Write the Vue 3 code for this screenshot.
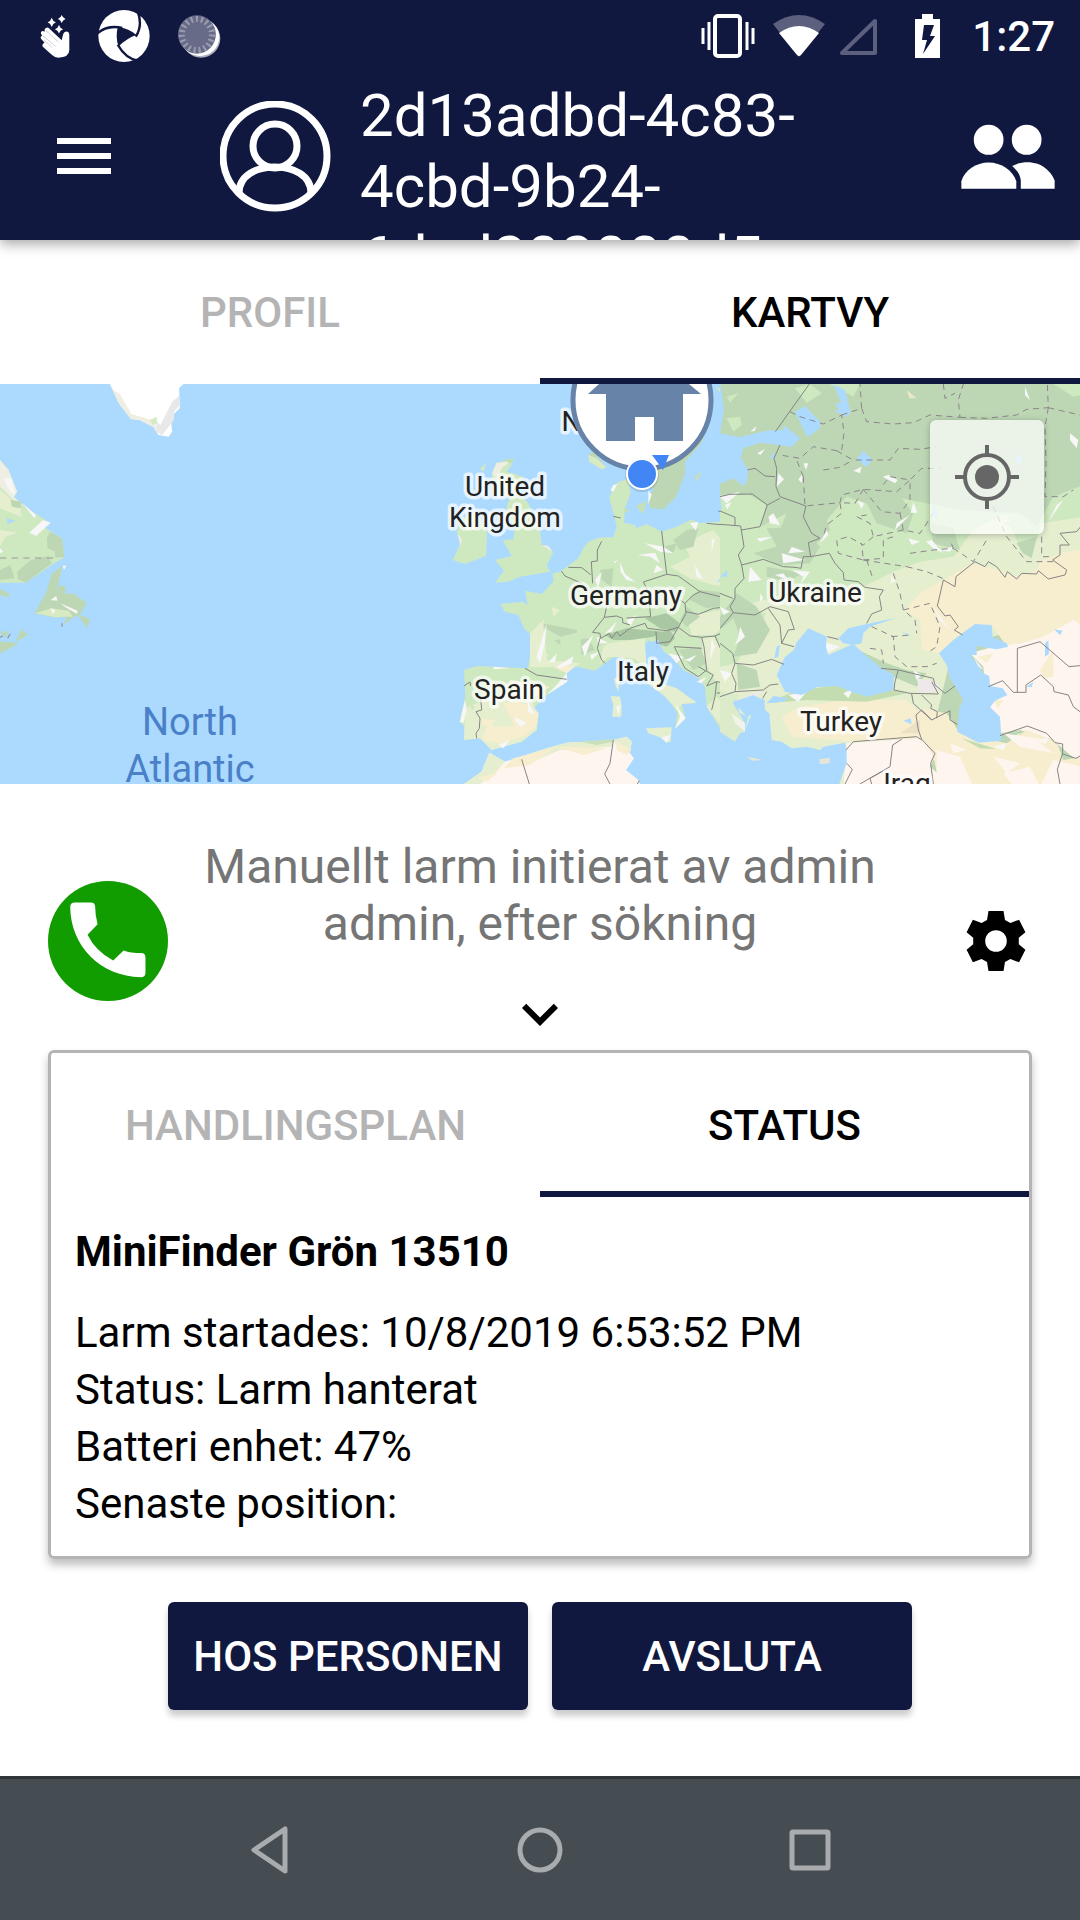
<script setup>
import { ref } from 'vue'

const mainTabs = ['PROFIL', 'KARTVY']
const planTabs = ['HANDLINGSPLAN', 'STATUS']
const mainTab = ref('KARTVY')
const planTab = ref('STATUS')

const details = [
  'Larm startades: 10/8/2019 6:53:52 PM',
  'Status: Larm hanterat',
  'Batteri enhet: 47%',
  'Senaste position:',
]

const countries = [
  { name: 'United', x: 505, y: 496 },
  { name: 'Kingdom', x: 505, y: 527 },
  { name: 'Germany', x: 626, y: 605 },
  { name: 'Spain', x: 509, y: 699 },
  { name: 'Italy', x: 643, y: 681 },
  { name: 'Ukraine', x: 815, y: 602 },
  { name: 'Turkey', x: 841, y: 731 },
  { name: 'Iraq', x: 907, y: 793 },
  { name: 'Norway', x: 609, y: 431 },
]
</script>

<template>
  <div class="screen">
    <header class="top">
      <div class="status-bar">
        <div class="status-left">
          <svg class="i-hand" viewBox="115 44 87 130" preserveAspectRatio="none">
            <g fill="#fff">
              <path d="M149 52q3 11 12 14q-9 3-12 14q-3-11-12-14q9-3 12-14zM178 44q3 9 11 12q-8 3-11 12q-3-9-11-12q8-3 11-12zM170 74q3 10 12 13q-9 3-12 13q-3-10-12-13q9-3 12-13z" />
              <path d="M131 84q6-4 10 0l37 36 4-18q3-9 11-8 7 1 7 9v47q0 22-32 23-10 0-18-8l-27-25q-3-5 1-9l4-4-9-10q-4-5-1-8l3-3-3-5q-2-6 3-9l8 2q-3-6 2-10z" />
            </g>
            <path d="M132 91l36 34M122 105l38 34M126 120l24 22" stroke="#b9bbcb" stroke-width="2" fill="none" />
          </svg>
          <svg class="i-logo" viewBox="290 29 150 154" preserveAspectRatio="none">
            <ellipse cx="365" cy="106" rx="74" ry="77" fill="#fff" />
            <path d="M347 79Q380 83 401 103Q374 112 349 137Q340 108 347 79z" fill="#111840" />
            <path d="M288 98Q318 72 360 82M399 108Q420 74 404 32M347 132Q370 174 408 180" fill="none" stroke="#111840" stroke-width="7" />
            <path d="M400 36L412 48L404 30zM390 183L410 176L425 185z" fill="#111840" />
          </svg>
          <svg class="i-sync" viewBox="513 42 125 130" preserveAspectRatio="none">
            <ellipse cx="580" cy="113" rx="56" ry="58" fill="#aeb0bf" />
            <ellipse cx="577" cy="109" rx="56" ry="57" fill="#fff" />
            <ellipse cx="568" cy="101" rx="55" ry="58" fill="#686b87" />
            <ellipse cx="568" cy="101" rx="44" ry="47" fill="none" stroke="#9a9caf" stroke-width="18" stroke-dasharray="6 9" />
          </svg>
        </div>
        <div class="status-right">
          <svg class="i-vibrate" viewBox="0 0 54 44" fill="none" stroke="#fff">
            <rect x="14" y="2" width="25" height="40" rx="3" stroke-width="4" />
            <path d="M2 14v16M8 8v28M46 8v28M52 14v16" stroke-width="3" />
          </svg>
          <svg class="i-wifi" viewBox="0 0 52 42">
            <path d="M0 9Q26-9 52 9L26 42z" fill="#5c5f7d" />
            <path d="M6 18Q26 4 46 18L28 40Q26 42 24 40z" fill="#fff" />
          </svg>
          <svg class="i-signal" viewBox="0 0 37 37">
            <path d="M2 35L35 3V35z" fill="none" stroke="#5c5f7d" stroke-width="4" stroke-linejoin="round" />
          </svg>
          <svg class="i-battery" viewBox="0 0 25 44">
            <path d="M7 0h11v5h7v39H0V5h7z" fill="#fff" />
            <path d="M9 11h10l-4 11h5L8 40l4-14H7z" fill="#111840" />
          </svg>
          <time class="clock">1:27</time>
        </div>
      </div>
      <div class="app-bar">
        <button class="icon-button" aria-label="Meny">
          <svg class="i-menu" viewBox="0 0 54 36"><path d="M0 0h54v6H0zM0 15h54v6H0zM0 30h54v6H0z" fill="#fff" /></svg>
        </button>
        <svg class="i-avatar" viewBox="0 0 111 111" fill="none" stroke="#fff" stroke-width="7">
          <circle cx="55" cy="55" r="52" />
          <circle cx="55" cy="45" r="22" />
          <path d="M19 92C19 74 37 66 55 66S91 74 91 92" />
        </svg>
        <h1 class="title">2d13adbd-4c83-4cbd-9b24-6dcd202000d5</h1>
        <button class="icon-button" aria-label="Personer">
          <svg class="i-people" viewBox="1224 377 272 194" preserveAspectRatio="none" fill="#fff">
            <ellipse cx="1304" cy="424" rx="43" ry="45" />
            <ellipse cx="1414" cy="424" rx="43" ry="45" />
            <path d="M1225 570V548C1234 515 1268 492 1304 492S1374 515 1384 548V570z" />
            <path d="M1372 502C1400 489 1424 489 1445 496C1470 505 1489 528 1495 546V570H1397V545C1395 527 1385 514 1372 502z" />
          </svg>
        </button>
      </div>
    </header>

    <nav class="tabs">
      <button v-for="tab in mainTabs" :key="tab" class="tab" :class="{ active: tab === mainTab }" @click="mainTab = tab">{{ tab }}</button>
    </nav>

    <section class="map">
      <svg class="map-canvas" viewBox="0 384 1080 400" preserveAspectRatio="xMidYMid slice">
        <defs>
          <clipPath id="east"><rect x="0" y="0" width="1090" height="1220" /></clipPath>
        </defs>
        <rect y="384" width="1080" height="400" fill="#acdaff" />

        <!-- Greenland -->
        <g transform="translate(0 230) scale(.3444 .3333)">
          <path d="M318 460L345 520L380 567L405 570L445 590L460 615L490 620L500 605L497 580L505 552L522 535L520 475L535 460z" fill="#fff" />
          <path d="M318 460L330 480L348 492L382 552L440 570L460 600L458 612L445 590L405 570L380 567L345 520z" fill="#efeee2" />
          <path d="M520 497L500 515L466 585L452 572L455 605L470 616L490 590L505 570L505 545L520 528z" fill="#e8e8e8" />
          <path d="M435 570L455 560L456 580L445 586z" fill="#d5eac5" />
        </g>

        <!-- Labrador and Newfoundland -->
        <g transform="translate(0 500) scale(.3444 .3333)">
          <path d="M0 -120L25 -90L50 -25L40 -10L85 30L145 68L125 80L180 115L187 172L150 195L75 248L0 248z" fill="#cee8bf" />
          <path d="M0 -120L25 -90L50 -25L40 -10L70 20L40 0L0 -40z" fill="#efeee2" />
          <path d="M10 -65L32 -65L45 -15L30 -25zM65 10L105 45L100 55zM85 98L125 60L147 68L105 108zM0 145L10 155L0 160z" fill="#f7f7f7" />
          <path d="M0 -30L60 20L62 50L0 25zM0 90L50 98L15 110L0 140z" fill="#e5efcf" />
          <path d="M145 95L180 115L187 172L160 172L160 155L138 145L136 115zM50 215L90 180L140 168L150 190L75 248L52 238zM0 210L30 195L42 235L0 240zM30 0L62 5L60 25L35 20z" fill="#bdd7b4" />
          <path d="M20 55L45 62L22 72z" fill="#acdaff" />
          <path d="M0 174H152V190" fill="none" stroke="#999" stroke-width="3" stroke-dasharray="18 16" />
          <path d="M182 197L150 222L135 275L100 340L155 352L195 352L182 375L225 345L254 385L262 358L232 345L252 308L210 280L190 282V260L175 255L165 270z" fill="#bdd7b4" />
          <path d="M102 340L150 325L200 333L212 350L190 350L160 352z" fill="#d8eac2" />
          <path d="M147 300L163 288L167 302zM175 310L225 332L224 342L190 322zM182 197L192 197L186 210zM145 325L160 330L155 343z" fill="#f7f7f7" />
          <path d="M0 267L30 283L22 292L0 285zM0 425L55 428L30 445L0 460zM62 388L82 405L45 425zM0 395L25 393L15 415z" fill="#bdd7b4" />
          <path d="M180 370V380M22 415L30 402M0 412L8 408" stroke="#888" stroke-width="3" />
        </g>

        <!-- Western and central Europe, northern Africa -->
        <g transform="translate(400 380) scale(.33333)">
          <path d="M170 455L182 490L158 540L195 552L258 528L262 450L230 400L190 410z" fill="#cee8bf" />
          <path d="M240 268L260 245L250 275zM276 280L290 248L342 238L330 262L320 275L370 290L350 330L385 370L420 450L425 495L460 515L440 558L452 575L360 590L325 605L285 608L312 572L285 540L335 528L308 480L340 478L345 440L315 400L330 350L275 340z" fill="#cee8bf" />
          <path d="M276 280L290 248L330 245L305 265L290 300zM425 495L445 498L458 515zM173 462L186 478L182 500z" fill="#efeee2" />
          <path d="M310 238L342 238L332 252zM275 325L300 330L290 345z" fill="#c3ddb0" />

          <path d="M640 320L655 305L685 298L692 340L675 385L672 428L705 435L710 445L740 432L785 455L830 440L875 418L895 430L960 425V100L1090 100V950L1020 965L1000 985L1035 1050L1010 1085L960 1045L920 980L915 920L890 890L850 870L820 835L770 800L745 780L735 800L740 860L790 912L830 925L848 945L890 968L845 972L857 1015L825 1046L832 1000L800 950L740 905L715 860L650 825L612 852L585 872L520 858L500 875L502 905L440 945L402 985L416 1000L410 1050L365 1085L310 1092L275 1110L240 1075L192 1080L195 1040L178 1025L196 950L192 870L230 858L383 865L390 830V762L372 745L355 705L315 695L300 672L368 665L382 675L376 632L425 642L460 605L458 580L480 575L535 535L550 505L565 485L600 472L640 472L650 440L640 400L628 355z" fill="#cee8bf" />
          <path d="M565 225L580 215L620 262L605 268L568 245zM880 100H938L905 190L855 245V282L828 352L790 388L752 385L745 350L760 330L748 290z" fill="#bdd7b4" />
          <path d="M708 378L742 362L728 402zM670 385L690 390L675 398zM883 290L905 275L890 305zM984 250L1008 238L990 258z" fill="#c6dfb8" />
          <path d="M565 225L590 235L620 262L605 268L568 245z" fill="#d8eac2" />

          <!-- dry and lowland areas -->
          <path d="M195 985L250 960L380 930L405 985L416 1000L410 1050L365 1085L275 1110L240 1075L192 1080zM390 760L430 720L450 790L440 840L540 850L500 880L460 860L390 862zM810 560L870 530L850 490L940 450L1000 520L1005 620L940 615L870 595zM860 710L985 685L1000 720L940 765L875 765zM905 775L940 770L1000 850L990 930L945 900L910 840zM625 790L735 775L740 860L700 835L625 830L600 850L610 800zM735 905L790 912L830 925L890 968L845 972L832 990L790 945zM950 950L1000 1000L980 1060L920 980zM480 690L455 680L460 710z" fill="#e5efcf" />
          <path d="M245 1080L260 1040L345 1040L310 970L360 965L415 1000L408 1040L370 1070L300 1090zM245 1015L285 1020L275 1040L245 1035zM330 900L450 920L400 955L340 930zM460 860L520 858L500 880z" fill="#f7edcf" />
          <path d="M192 1212L245 1175L268 1118L315 1145L440 1105L500 1088L640 1080L680 1070L695 1085L690 1120L702 1135L678 1170L715 1200L720 1212z" fill="#fff5ef" />
          <path d="M192 1212L245 1175L268 1118L315 1145L285 1180L240 1212zM350 1135L440 1105L500 1088L640 1080L635 1100L480 1110L410 1140zM640 1080L680 1070L695 1085L690 1120L660 1110z" fill="#e5efcf" />
          <path d="M230 1195L300 1175L340 1135L480 1100L620 1105L550 1125L470 1100L390 1155L310 1165L260 1205zM650 1085L690 1105L680 1125L650 1110z" fill="#f7edcf" />
          <path d="M540 1085L640 1078V1085L590 1095z" fill="#c9e0b8" />
          <path d="M738 1045L815 1042L812 1085L800 1088L780 1072L745 1060zM632 948L660 950L665 975L664 1010L637 1010L640 975zM642 895L658 895L655 935L646 915z" fill="#e5efcf" />
          <path d="M960 1045L1000 1060L1018 1070L1005 1085L965 1070z" fill="#d5eac5" />

          <!-- forests and mountains -->
          <path d="M615 765L680 745L735 750L790 755L760 770L690 780L640 780zM735 715L800 700L840 730L825 755L780 745zM770 760L810 750L825 775L800 800L770 790z" fill="#a9c7a3" />
          <path d="M960 12L1090 12V170L1020 172L975 160L962 125zM820 480L860 450L895 445L880 500L840 510zM870 650L900 630L1000 640L985 675L920 685L870 660zM985 720L1030 700L1090 710V800L1000 805L970 770L1000 760zM1020 205L1090 185V400L1040 350L1010 310L1045 315L1040 260L1020 230zM530 780L565 775L585 810L540 825zM600 570L640 565L635 620L605 600zM430 730L440 820L500 840L540 810L530 750L480 740zM835 810L900 800L920 850L880 870zM840 720L860 680L900 710L860 740zM790 500L830 490L820 520z" fill="#bdd7b4" />
          <path d="M290 862L375 865L400 880L380 905L340 890zM200 950L225 985L215 990zM965 1000L990 1020L975 1035zM480 770L540 755L545 830L500 845L440 820L430 740zM945 20L1015 45L985 65zM975 110L1020 120L1010 155L975 140z" fill="#cee8bf" />
          <path d="M462 782L480 778L482 795z" fill="#bdd7b4" />

          <!-- bare patches -->
          <path d="M712 525L765 518L780 550L750 530zM735 490L790 500L820 520L780 515zM870 430L895 425L888 452zM935 480L945 475L935 515zM660 545L675 582L705 605L680 600L662 575zM585 600L605 575L595 625zM885 555L910 600L890 590zM410 830L440 730L435 790L420 850zM445 848L470 820L465 845zM470 860L520 828L515 850L480 865zM545 800L580 765L570 790L555 830zM570 825L600 815L575 840zM615 760L650 725L635 755zM680 720L710 705L690 740zM590 770L625 790L595 790zM985 735L1035 755L1005 795L1000 775L1018 765zM935 775L945 800L930 840zM855 840L890 825L870 845zM890 905L920 890L905 910zM805 820L850 830L830 850zM825 970L857 1015L825 1046L840 1010zM640 315L652 312L640 335L632 330zM745 330L755 345L745 372zM345 1010L380 1030L362 1040L345 1020zM380 955L405 1005L385 995zM440 945L465 920L500 880L502 905zM282 860L330 865L280 868zM295 1095L330 1080L310 1105zM180 1025L195 960L200 990L190 1030zM965 320L990 330L1010 345L975 340zM970 370L995 360L985 385zM1060 145L1072 140L1068 155zM640 545L655 540L645 550zM770 555L790 570L760 580zM960 605L975 560L985 590zM1000 1015L1035 1050L1005 1035zM785 1072L812 1065L800 1088zM648 980L662 975L655 1005z" fill="#f7f7f7" />
          <path d="M950 608L982 568V590zM735 790L775 780L800 835L780 870L740 860z" fill="#acdaff" />

          <!-- borders -->
          <g fill="none" stroke="#858585" stroke-width="3" stroke-linejoin="round">
            <path d="M785 453L800 583L730 606L748 640M800 583L835 588L900 635L960 650L1000 640L1035 590L1015 520L1030 490L1025 440L920 430M605 484L592 510V543L574 545L578 610M505 562L545 563L572 584M484 573L495 588L545 610M640 409L662 414M620 680L613 712L578 757L600 760L602 775L628 760L635 775L650 755L660 768L690 745L735 730L742 745L800 752L835 742L858 700L855 670L840 660M613 712L650 708L668 715V728L690 735M680 714L752 710L748 670M855 670L880 645L900 635M858 695L895 703L940 685L985 680L1005 650L1000 640M985 680L1005 700L985 750L945 768L905 772L870 768L835 742M835 742L810 785L770 790L768 755M600 775L592 805L605 840L615 850M905 772L912 800L920 870L895 890L855 865L823 800L905 805M945 768L968 820L1000 820L1000 850L1005 900L980 910L950 905L945 950L935 990M895 860L940 885L920 918L950 905M1000 850L1080 852M950 940L1010 930L1080 930M375 865L410 885L500 898M192 918L210 906L212 918M242 955L245 990L228 995L240 1015L238 1045L228 1060L230 1075M365 1138L388 1212M640 1080L630 1150L614 1182L630 1212M712 1212L718 1202M955 393L1005 412L1005 432M960 358L985 343L1058 342L1080 360M1030 555L1080 542M1025 450L1080 443M1042 270L1068 263L1080 275" />
          </g>
          <path d="M1043 1132L1085 1138L1060 1140z" fill="#efeee2" />
        </g>

        <!-- Eastern Europe, Black Sea, Caspian -->
        <g transform="translate(720 380) scale(.33333)" clip-path="url(#east)">
          <rect width="1090" height="1220" fill="#bdd7b4" />
          <path d="M0 345L90 345L140 375L120 440L200 400L180 450L250 470L290 490L330 450L320 420L380 350L440 370L470 430L560 460L580 400L545 355L620 370L720 390L900 400L950 440L1000 350L1090 315V650L600 720L0 900z" fill="#cee8bf" />
          <path d="M0 860L50 850L140 700L60 680L130 660L300 640L430 620L520 575L600 545L700 530L760 450L860 400L905 520L935 530L965 430L1090 410V700L700 800L600 1212L0 1212z" fill="#e5efcf" />
          <path d="M140 445L240 440L300 500L270 550L180 555L100 520L170 500zM0 710L50 640L110 680L150 750L110 820L40 830L60 770L40 715L0 750zM890 490L950 470L935 535L910 520zM50 850L110 870L120 920L55 930zM140 560L250 580L200 605L140 590zM630 430L700 445L720 510L640 490zM415 810L500 850L560 870L620 880L590 920L520 890L470 860z" fill="#bdd7b4" />
          <path d="M555 690L600 640L670 600L755 550L855 575L890 590L950 570L960 545L1030 515L1090 510V730L1020 760L860 800L820 740L765 735L720 765L660 820L605 808L600 720z" fill="#f7edcf" />
          <path d="M750 820L820 800L900 790L970 770L1060 720L1090 740V1160L1000 1080L900 1050L840 1060L800 950L790 860z" fill="#fff5ef" />
          <path d="M185 1010L240 980L380 960L560 960L600 1000L620 1075L400 1085L215 1070z" fill="#f7edcf" />
          <path d="M380 1090L600 1075L650 1120L630 1160L700 1220H370z" fill="#fff5ef" />
          <path d="M595 985L680 1000L720 1060L860 1090L920 1050L1010 1085L1030 1140L1090 1130V1220H660L640 1130L605 1070z" fill="#f7edcf" />
          <path d="M650 1110L720 1130L760 1220H650zM850 1060L990 1080L960 1090L1000 1120L900 1100zM1000 1140L1090 1160V1220H960zM820 1130L900 1150L860 1180zM850 1180L930 1160L960 1220H880zM690 1090L740 1110L700 1120z" fill="#fff5ef" />
          <path d="M960 870L1000 810L1000 890L970 895zM775 830L820 820L800 850zM820 960L850 960L835 985z" fill="#f7edcf" />
          <path d="M540 1060L600 1020L600 1060z" fill="#eee0c5" />
          <path d="M140 970L220 935L350 915L440 945L520 930L560 940L440 965L260 960zM725 1075L790 1095L830 1108L780 1105z" fill="#c3ddb0" />

          <!-- clearings -->
          <path d="M20 50L55 40L30 68zM225 25L270 12L305 40L260 68zM330 12L420 12L400 50zM20 115L60 110L65 135L40 155zM1000 12L1090 12V45L1060 50zM360 430L395 430L380 450zM900 420L880 450L850 430z" fill="#cee8bf" />
          <path d="M560 30L590 55L568 55z" fill="#e8e8c5" />
          <path d="M92 155L108 138L105 152zM112 220L135 207L122 225zM0 350L60 335L20 370zM15 375L35 365L22 388zM170 320L175 280L192 298zM235 298L248 282L245 310zM250 250H265L258 270zM400 272L425 260L420 280zM505 285L533 300L525 310L488 290zM412 362L432 370L425 388zM580 365L592 398L572 398zM570 405L525 450L530 430zM635 480L670 520L640 505L618 485zM160 400L180 435L150 430L145 410zM300 490L320 450L325 465zM215 500L255 515L205 520zM185 520L255 540L190 550zM90 560L125 600L85 605zM215 570L270 575L240 615L250 590zM165 585L190 580L205 600zM110 475L160 470L120 485zM1050 160L1075 180L1070 205L1050 180zM915 20L930 60L915 45zM1030 360L985 425L1010 375zM0 680L30 695L10 705zM60 740L75 770L45 795L55 770zM0 870L35 880L15 905zM295 780L360 800L320 820zM370 940L400 925L385 955zM205 945L260 935L235 965zM640 680L690 750L660 720zM515 585L525 605L512 610zM580 870L605 885L590 900zM45 1000L75 1050L40 1035zM565 475L600 485L575 495zM655 510L700 500L690 515zM120 640L130 655L120 665zM820 1100L860 1090L850 1110zM870 1075L900 1060L885 1085zM965 1080L985 1070L975 1095zM760 830L790 870L775 860zM800 780L850 800L825 815z" fill="#f7f7f7" />
          <path d="M590 895L650 905L660 930L600 940zM75 950L130 930L110 950z" fill="#efe8ea" />

          <!-- water -->
          <g fill="#acdaff">
            <path d="M0 12H2L12 90L0 160L60 172L140 152L190 150L190 135L240 175L215 200L120 188L70 205L62 235L85 270L80 305L70 318L40 295L0 312z" />
            <path d="M225 95L255 78L300 125V145L262 172zM340 12L375 30L392 100L372 112L345 70L365 70zM410 238L430 213L458 240L438 260zM340 95L375 85L365 100zM0 350L5 385L0 395zM150 230L163 220L165 240zM882 240L903 222L905 252zM635 360L655 405L645 415zM0 590L22 570L20 590z" />
            <path d="M170 885L195 830L222 810L228 790L265 745L310 765L320 770L318 800L325 825L385 798L400 792L425 815L480 862L522 885L520 930L440 950L395 935L352 918L290 922L245 945L195 935z" />
            <path d="M355 775L385 745L440 732L530 713L450 740L430 760L425 790L400 795L370 790zM170 800L180 795L175 830L163 835z" />
            <path d="M657 820L700 780L765 732L815 735L818 772L860 790L865 800L830 808L770 798V825L752 825L790 880L808 888L810 918L848 925L862 945L825 962L810 982L840 1010L845 1082L775 1088L712 1055L718 985L730 960L690 895L680 855z" />
            <path d="M140 970L160 948L205 955L190 965zM550 1022L572 1015L575 1033zM1002 748L1028 752L1020 765zM975 790L985 780L987 822L975 830zM920 920L940 905L935 922zM540 752L575 768L560 765zM0 960L45 955L60 1000L85 1010L75 1050L110 965L130 955L135 990L148 1000L155 1080L185 1085L215 1105L260 1100L300 1110L310 1100L375 1088L380 1112V1150L358 1212V1220H0z" />
            <path d="M40 965L100 945L135 962L133 990L80 1010z" />
          </g>
          <path d="M0 930L60 945L38 968L75 1030V1055L60 1060L45 1085L0 1055z" fill="#dcebc9" />
          <path d="M35 1000L75 1030V1055L45 1030z" fill="#f1f3ea" />
          <path d="M82 1130L128 1140L95 1142zM298 1138L330 1133L328 1150L300 1152z" fill="#e6e6d5" />

          <g fill="none" stroke="#858585" stroke-width="3" stroke-linejoin="round">
            <path d="M268 12L166 155M180 195L162 235L170 265L168 320L180 350L258 378L250 410L275 460L300 475L265 488L272 530L328 520L345 550L370 578L372 600L415 605L435 622L490 630L478 650L485 690L455 702L440 730M82 270L105 265L135 288L165 290M0 350L30 343L97 342L142 375L120 440L65 450M142 375L180 355M0 393L45 412V435M0 433L62 438L72 500L55 525L65 555L72 595L45 625L45 655L30 680L40 698L0 745M65 555L130 538L190 560L225 562L243 565L250 530L272 530M40 698L105 705L150 680L205 695L223 748L205 750L185 790L222 800M145 685L180 735L185 790M0 640L38 655M0 790L38 820L45 850L100 855L155 838L192 853M45 850L35 880L48 910L45 935L0 950M45 935L130 930L150 915L175 912M128 955L140 935" />
            <path d="M322 770L355 778M483 865L535 870L640 895L645 915L675 940L705 918M535 870L525 905L522 930L570 940L655 942L635 905M575 942L580 970L635 1020L690 992V1020L712 1033M605 945L635 975L632 985L652 995L650 1015M635 1020L605 990L588 1005L595 1050L605 1078L640 1115L645 1120L632 1150L640 1212M378 1110L400 1085L590 1070L605 1080M545 1078L518 1095L510 1160L420 1212M380 1150L397 1168L375 1212M495 1170L450 1195L455 1212" />
            <path d="M440 730M728 765L703 750L715 740L690 705L675 708L652 678L670 600L705 620L708 590L765 545L795 560L805 545L830 560L855 592L862 575L890 597L905 580L950 582L955 572L985 597L1035 585L1040 570L998 540L1020 525V495L1048 495L1020 460L1070 455L1090 430M892 937V805L960 785L1047 860L1080 857M805 920L848 902L880 937H918V915L962 885L1000 920L1002 935L1045 945L1060 980L1080 995M840 1067L922 1038L980 1060L1005 1088L1028 1092V1120L1012 1168L1020 1212M1028 1122L1068 1135L1080 1128" />
          </g>
          <g fill="none" stroke="#8d858b" stroke-width="3" stroke-dasharray="18 14">
            <path d="M210 95L240 110L310 132L365 105L372 160L365 210L350 212L280 200L240 235L180 225M365 105L425 85L420 12M425 85L440 125L520 132L580 128L630 105L720 112L715 60L730 12M670 12L675 55L705 40M720 112L800 115L890 105L920 88L985 83L982 12M985 83L1080 105M985 83L975 140L978 250L975 350L1030 350L1060 330M350 212L390 235L410 240L510 240L535 205L600 208L650 200M310 270L360 262L390 245M250 290L230 240M250 290L255 378L360 368L365 345L430 328L530 335L570 300L510 290L480 325M430 328L405 370L360 368L365 400L320 435L310 470M430 328L485 395L540 400L570 360V300L605 265L660 265M540 400L550 450L600 460L640 400M550 450L460 470L450 430L410 410L440 405M460 470L430 495L385 470L350 480L355 520L430 540L425 490M430 540L490 535V480L520 470M430 540L560 560M570 520L640 510L700 505L690 480M560 560L620 575L680 600M440 540L460 600M700 505L760 545L800 480M820 380L860 470L920 545L1000 545M965 470V530H1000M520 580L540 640L550 690L585 720L590 760M550 690L630 670L660 740L650 800L620 820M455 740L520 770L525 830L560 860L620 860L650 850M515 770L570 765M450 805L485 810L490 850" />
          </g>
        </g>

        <g class="country">
          <text v-for="c in countries" :key="c.name" :x="c.x" :y="c.y">{{ c.name }}</text>
        </g>
        <g class="ocean">
          <text x="190" y="735">North</text>
          <text x="190" y="782">Atlantic</text>
        </g>

        <!-- home marker and own position -->
        <circle cx="642" cy="400" r="69" fill="#fff" stroke="#6883a8" stroke-width="5" />
        <path d="M588 394L642 345L701 394H683V441H654V417H635V441H606V394z" fill="#6883a8" />
        <path d="M652 455H669L663 470z" fill="#4285f4" />
        <circle cx="642" cy="475" r="17" fill="#000" opacity=".12" />
        <circle cx="642" cy="474" r="15" fill="#4285f4" stroke="#fff" stroke-width="2" />
      </svg>
      <button class="locate" aria-label="Min position">
        <svg class="i-locate" viewBox="0 0 64 64" stroke="#666" stroke-width="4">
          <circle cx="32" cy="32" r="22" fill="none" />
          <circle cx="32" cy="32" r="12" fill="#666" stroke="none" />
          <path d="M32 0v9M32 55v9M0 32h9M55 32h9" />
        </svg>
      </button>
    </section>

    <main class="content">
      <section class="alarm">
        <button class="icon-button" aria-label="Ring">
          <svg class="i-phone" viewBox="139 155 346 358" preserveAspectRatio="none">
            <ellipse cx="312" cy="334" rx="173" ry="179" fill="#119c00" />
            <path d="M216 219H262Q275 219 275 232Q275 258 282 284L253 315Q276 364 327 392L357 362Q378 370 407 370Q420 370 420 383V428Q420 442 407 442C290 440 204 350 203 232Q204 219 216 219z" fill="#fff" />
          </svg>
        </button>
        <div class="message">
          <p>Manuellt larm initierat av admin admin, efter sökning</p>
          <button class="icon-button" aria-label="Visa mer">
            <svg class="i-24" viewBox="0 0 24 24"><path d="M16.59 8.59L12 13.17L7.41 8.59L6 10l6 6 6-6z" /></svg>
          </button>
        </div>
        <button class="icon-button settings" aria-label="Inställningar">
          <svg class="i-24" viewBox="0 0 24 24"><path fill-rule="evenodd" d="M9.5 2h5l.5 3 1.8 1 2.9-1.1 2.1 4.2-2.2 1.8v2.2l2.2 1.8-2.1 4.2-2.9-1.1-1.8 1-.5 3h-5l-.5-3-1.8-1-2.9 1.1-2.1-4.2 2.2-1.8v-2.2l-2.2-1.8 2.1-4.2 2.9 1.1 1.8-1zM12 8.4a3.6 3.6 0 1 0 0 7.2a3.6 3.6 0 1 0 0-7.2z" /></svg>
        </button>
      </section>

      <section class="card">
        <nav class="tabs">
          <button v-for="tab in planTabs" :key="tab" class="tab" :class="{ active: tab === planTab }" @click="planTab = tab">{{ tab }}</button>
        </nav>
        <div class="card-body">
          <h2>MiniFinder Grön 13510</h2>
          <p v-for="line in details" :key="line">{{ line }}</p>
        </div>
      </section>

      <div class="actions">
        <button class="action">HOS PERSONEN</button>
        <button class="action">AVSLUTA</button>
      </div>
    </main>

    <footer class="nav-bar">
      <button class="icon-button" aria-label="Tillbaka">
        <svg class="i-nav" viewBox="0 0 48 48"><path d="M8 24L39 3V45z" stroke-linejoin="round" /></svg>
      </button>
      <button class="icon-button" aria-label="Hem">
        <svg class="i-nav" viewBox="0 0 48 48"><circle cx="24" cy="24" r="20" /></svg>
      </button>
      <button class="icon-button" aria-label="Översikt">
        <svg class="i-nav" viewBox="0 0 48 48"><rect x="6" y="6" width="36" height="36" rx="1" /></svg>
      </button>
    </footer>
  </div>
</template>

<style>
body {
  margin: 0;
  background: #fff;
}
</style>

<style scoped>
.screen {
  display: flex;
  flex-direction: column;
  min-height: 100vh;
  font-family: Roboto, "Liberation Sans", sans-serif;
  font-size: 42px;
  color: #000;
}

svg {
  display: block;
  flex: none;
}

button {
  font: inherit;
  border: 0;
  margin: 0;
  padding: 0;
  background: none;
  cursor: pointer;
}

.icon-button {
  display: flex;
  align-items: center;
  justify-content: center;
  flex: none;
}

/* header */
.top {
  position: relative;
  z-index: 1;
  background: #111840;
  color: #fff;
  box-shadow: 0 4px 12px rgba(0, 0, 0, 0.35);
}

.status-bar {
  display: flex;
  justify-content: space-between;
  align-items: center;
  height: 72px;
  padding: 0 25px 0 40px;
}

.status-left,
.status-right {
  display: flex;
  align-items: center;
}

.status-left {
  gap: 28px;
}

.i-hand { width: 30px; height: 43px; }
.i-logo { width: 52px; height: 52px; }
.i-sync { width: 43px; height: 43px; }
.i-vibrate { width: 54px; height: 44px; }
.i-wifi { width: 52px; height: 42px; margin-left: 18px; }
.i-signal { width: 37px; height: 37px; margin-left: 15px; }
.i-battery { width: 25px; height: 44px; margin-left: 38px; }

.clock {
  margin-left: 32px;
  font-weight: 500;
}

.app-bar {
  display: flex;
  align-items: center;
  height: 168px;
  padding: 0 25px 0 57px;
}

.i-menu { width: 54px; height: 36px; }
.i-avatar { width: 111px; height: 111px; margin-left: 109px; }
.i-people { width: 94px; height: 65px; }

.title {
  flex: 1;
  align-self: stretch;
  margin: 0 140px 0 29px;
  padding-top: 8px;
  overflow: hidden;
  font-size: 60px;
  line-height: 71px;
  font-weight: 400;
}

/* tabs */
.tabs {
  display: flex;
}

.tab {
  flex: 1;
  height: 144px;
  padding-top: 6px;
  border-bottom: 6px solid transparent;
  font-weight: 500;
  color: #b4b4b4;
}

.tab.active {
  color: #000;
  border-bottom-color: #111840;
}

/* map */
.map {
  position: relative;
  height: 400px;
}

.map-canvas {
  width: 100%;
  height: 100%;
}

.country text {
  font-size: 28px;
  fill: #222;
  text-anchor: middle;
  stroke: rgba(255, 255, 255, 0.7);
  stroke-width: 7px;
  stroke-linejoin: round;
  paint-order: stroke;
}

.ocean text {
  font-size: 38px;
  fill: #4a80c8;
  text-anchor: middle;
}

.locate {
  position: absolute;
  top: 36px;
  right: 36px;
  width: 114px;
  height: 114px;
  display: flex;
  align-items: center;
  justify-content: center;
  border-radius: 6px;
  background: rgba(255, 255, 255, 0.7);
  box-shadow: 0 1px 6px rgba(0, 0, 0, 0.25);
}

.i-locate { width: 64px; height: 64px; }

/* content */
.content {
  flex: 1;
  padding: 48px 48px 64px;
}

.alarm {
  display: flex;
  align-items: center;
}

.i-phone { width: 120px; height: 120px; }
.i-24 { width: 72px; height: 72px; }

.settings {
  margin-left: 48px;
}

.message {
  flex: 1;
  display: flex;
  flex-direction: column;
  align-items: center;
  gap: 26px;
  padding: 6px 24px 0;
}

.message p {
  margin: 0;
  font-size: 48px;
  line-height: 57px;
  text-align: center;
  color: #757575;
}

.card {
  border: 3px solid #b4b4b4;
  border-radius: 6px;
  box-shadow: 0 6px 9px rgba(0, 0, 0, 0.25);
}

.card-body {
  padding: 26px 24px 24px;
  line-height: 57px;
}

.card-body h2 {
  margin: 0 0 24px;
  font-size: 42px;
  font-weight: 700;
}

.card-body p {
  margin: 0;
}

.actions {
  display: flex;
  justify-content: center;
  gap: 24px;
  margin-top: 43px;
}

.action {
  width: 360px;
  height: 108px;
  border-radius: 6px;
  background: #111840;
  color: #fff;
  font-weight: 500;
  box-shadow: 0 6px 6px rgba(0, 0, 0, 0.2);
}

/* system navigation */
.nav-bar {
  display: flex;
  justify-content: center;
  height: 141px;
  border-top: 3px solid #2f3438;
  background: #454c52;
}

.nav-bar .icon-button {
  width: 25%;
}

.i-nav {
  width: 48px;
  height: 48px;
  fill: none;
  stroke: #a9acaf;
  stroke-width: 5px;
}
</style>
